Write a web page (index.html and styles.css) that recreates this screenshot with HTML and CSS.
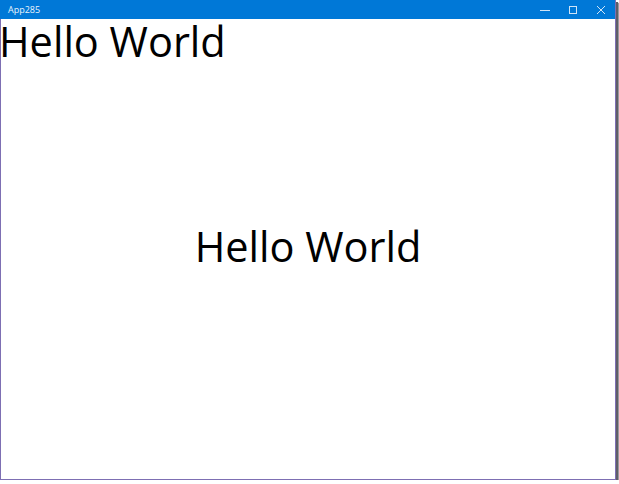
FILE: index.html
```html
<!DOCTYPE html>
<html lang="en">
<head>
    <meta charset="UTF-8">
    <title>App285</title>
    <link rel="stylesheet" href="styles.css">
</head>
<body>

    <div class="window">
        <div class="titlebar">
            <span class="title">App285</span>
            <div class="caption-buttons">
                <span class="caption-btn">
                    <svg width="10" height="10" viewBox="0 0 10 10"><path d="M0 5.5h10" stroke="#cfe4f7" stroke-width="1"/></svg>
                </span>
                <span class="caption-btn">
                    <svg width="10" height="10" viewBox="0 0 10 10"><rect x="1.5" y="1.5" width="7" height="7" fill="none" stroke="#cfe4f7" stroke-width="1"/></svg>
                </span>
                <span class="caption-btn">
                    <svg width="10" height="10" viewBox="0 0 10 10"><path d="M1 1l8 8M9 1l-8 8" stroke="#cfe4f7" stroke-width="1"/></svg>
                </span>
            </div>
        </div>
        <div class="content">
            <h1 class="corner-text">Hello World</h1>
            <div class="center-text">Hello World</div>
        </div>
    </div>

</body>
</html>
```

FILE: styles.css
```css
body {
    margin: 0;
    background: #fff;
    font-family: "Open Sans", "Noto Sans", sans-serif;
}
.window {
    width: 614px;
    height: 479px;
    border: 1px solid #7d6fb3;
    border-top: none;
    display: flex;
    flex-direction: column;
    box-shadow: 2px 2px 0 #5f5f68, 3px 3px 1px #9a9aa0;
    background: #fff;
}
.titlebar {
    height: 19px;
    background: #0078d7;
    display: flex;
    align-items: center;
    justify-content: space-between;
    margin-left: -1px;
}
.title {
    color: #e8f2fb;
    font-size: 9px;
    padding-left: 8px;
}
.caption-buttons {
    display: flex;
}
.caption-btn {
    width: 28px;
    height: 19px;
    display: flex;
    align-items: center;
    justify-content: center;
}
.content {
    flex: 1;
    position: relative;
    display: flex;
    align-items: center;
    justify-content: center;
}
.corner-text {
    position: absolute;
    top: 0;
    left: -2px;
    margin: 0;
    font-weight: normal;
    font-size: 41.5px;
    line-height: 44px;
    color: #000;
}
.center-text {
    font-size: 41.5px;
    line-height: 50px;
    color: #000;
    margin-bottom: 6px;
}
```
